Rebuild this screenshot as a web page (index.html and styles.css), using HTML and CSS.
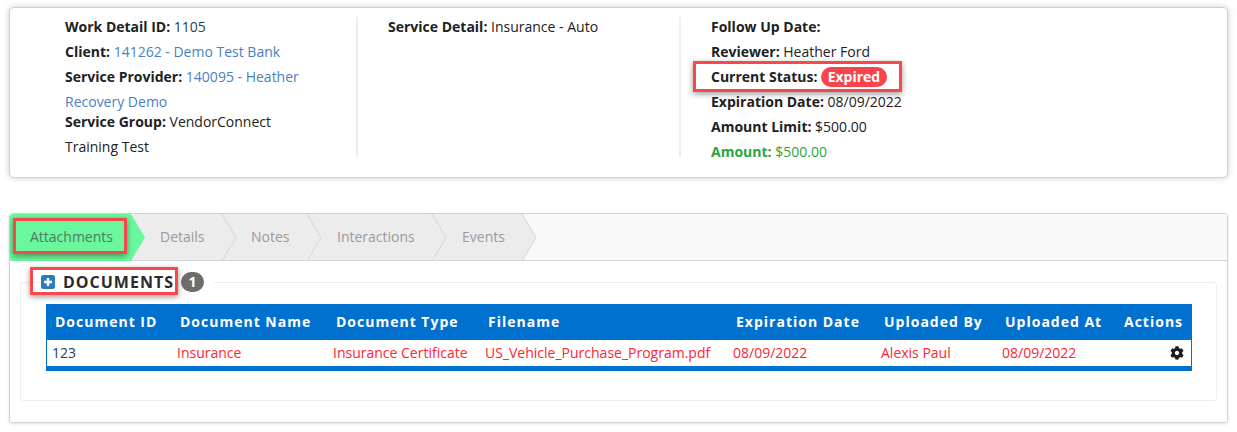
FILE: index.html
```html
<!DOCTYPE html>
<html lang="en">
<head>
<meta charset="utf-8">
<title>Work Detail</title>
<link rel="stylesheet" href="styles.css">
</head>
<body>
<section class="summary">
  <div class="col">
    <div class="row"><b>Work Detail ID:</b> <span class="navy">1105</span></div>
    <div class="row"><b>Client:</b> <a>141262 - Demo Test Bank</a></div>
    <div class="row"><b>Service Provider:</b> <a>140095 - Heather Recovery Demo</a></div>
    <div class="row tight"><b>Service Group:</b> VendorConnect Training Test</div>
  </div>
  <div class="col">
    <div class="row"><b>Service Detail:</b> Insurance - Auto</div>
  </div>
  <div class="col last">
    <div class="row"><b>Follow Up Date:</b></div>
    <div class="row"><b>Reviewer:</b> Heather Ford</div>
    <div class="row marked"><b>Current Status:</b> <span class="pill">Expired</span><i class="mark mark-status"></i></div>
    <div class="row"><b>Expiration Date:</b> 08/09/2022</div>
    <div class="row"><b>Amount Limit:</b> $500.00</div>
    <div class="row green"><b>Amount:</b> $500.00</div>
  </div>
</section>

<section class="panel">
  <nav class="tabs">
    <div class="tab active">Attachments<i class="mark mark-tab"></i><svg class="arrow" viewBox="0 0 14 48" preserveAspectRatio="none"><polygon points="0,0 14,24 0,48" fill="#6bf79e"/></svg></div>
    <div class="tab details">Details<svg class="arrow" viewBox="0 0 14 48" preserveAspectRatio="none"><polygon points="0,0 14,24 0,48" fill="#ececec"/><polyline points="0,0 14,24 0,48" fill="none" stroke="#d6d6d6"/></svg></div>
    <div class="tab notes">Notes<svg class="arrow" viewBox="0 0 14 48" preserveAspectRatio="none"><polygon points="0,0 14,24 0,48" fill="#ececec"/><polyline points="0,0 14,24 0,48" fill="none" stroke="#d6d6d6"/></svg></div>
    <div class="tab interactions">Interactions<svg class="arrow" viewBox="0 0 14 48" preserveAspectRatio="none"><polygon points="0,0 14,24 0,48" fill="#ececec"/><polyline points="0,0 14,24 0,48" fill="none" stroke="#d6d6d6"/></svg></div>
    <div class="tab events">Events<svg class="arrow" viewBox="0 0 14 48" preserveAspectRatio="none"><polygon points="0,0 14,24 0,48" fill="#ececec"/><polyline points="0,0 14,24 0,48" fill="none" stroke="#d6d6d6"/></svg></div>
  </nav>
  <div class="panel-body">
    <fieldset class="docs">
      <legend class="legend">
        <svg class="plus" viewBox="0 0 14 14"><rect width="14" height="14" rx="2.5" fill="#2b7cb9"/><path d="M7 3v8M3 7h8" stroke="#fff" stroke-width="2.4"/></svg>
        <span class="legend-title">DOCUMENTS</span>
        <span class="count">1</span>
        <i class="mark mark-docs"></i>
      </legend>
      <table class="grid">
        <colgroup>
          <col class="c1"><col class="c2"><col class="c3"><col class="c4"><col class="c5"><col class="c6"><col class="c7"><col class="c8">
        </colgroup>
        <thead>
          <tr><th>Document ID</th><th>Document Name</th><th>Document Type</th><th>Filename</th><th>Expiration Date</th><th>Uploaded By</th><th>Uploaded At</th><th>Actions</th></tr>
        </thead>
        <tbody>
          <tr>
            <td class="navy">123</td><td>Insurance</td><td>Insurance Certificate</td><td>US_Vehicle_Purchase_Program.pdf</td><td>08/09/2022</td><td>Alexis Paul</td><td>08/09/2022</td>
            <td class="action"><svg class="gear" viewBox="0 0 512 512"><path fill="#1b1b1b" d="M487.4 315.7l-42.6-24.6c4.3-23.2 4.3-47 0-70.2l42.6-24.6c4.9-2.8 7.1-8.6 5.5-14-11.1-35.6-30-67.8-54.7-94.6-3.8-4.1-10-5.1-14.8-2.3L380.8 110c-17.9-15.4-38.5-27.3-60.8-35.1V25.8c0-5.6-3.9-10.5-9.4-11.7-36.7-8.2-74.3-7.8-109.2 0-5.5 1.2-9.4 6.1-9.4 11.7V75c-22.2 7.9-42.8 19.8-60.8 35.1L88.7 85.5c-4.9-2.8-11-1.9-14.8 2.3-24.7 26.7-43.6 58.9-54.7 94.6-1.7 5.4.6 11.2 5.5 14L67.3 221c-4.3 23.2-4.3 47 0 70.2l-42.6 24.6c-4.9 2.8-7.1 8.6-5.5 14 11.1 35.6 30 67.8 54.7 94.6 3.8 4.1 10 5.1 14.8 2.3l42.6-24.6c17.9 15.4 38.5 27.3 60.8 35.1v49.2c0 5.6 3.9 10.5 9.4 11.7 36.7 8.2 74.3 7.8 109.2 0 5.5-1.2 9.4-6.1 9.4-11.7v-49.2c22.2-7.9 42.8-19.8 60.8-35.1l42.6 24.6c4.9 2.8 11 1.9 14.8-2.3 24.7-26.7 43.6-58.9 54.7-94.6 1.5-5.5-.7-11.3-5.6-14.1zM256 336c-44.1 0-80-35.9-80-80s35.9-80 80-80 80 35.9 80 80-35.9 80-80 80z"/></svg></td>
          </tr>
        </tbody>
      </table>
    </fieldset>
  </div>
</section>
</body>
</html>
```
FILE: styles.css
```css
* { box-sizing: border-box; }
html, body { margin: 0; }
body {
  width: 1237px;
  height: 432px;
  overflow: hidden;
  padding: 7px 9px 0 9px;
  background: #fff;
  font-family: "Open Sans", "Liberation Sans", sans-serif;
  font-size: 14px;
  color: #212121;
}
b { font-weight: 700; }
.summary {
  display: flex;
  height: 171px;
  padding: 9px 25px 0;
  background: #fff;
  border: 1px solid #cfcfcf;
  border-radius: 5px;
  box-shadow: 0 0 6px rgba(0, 0, 0, .2);
}
.col {
  width: 323px;
  height: 140px;
  padding: 0 30px;
  border-right: 2px solid #eee;
}
.col.last { border-right: 0; height: auto; }
.row { line-height: 25px; position: relative; }
.row:first-child { margin-top: -3px; }
.row.tight { margin-top: -5px; }
.navy { color: #25405f; }
a { color: #4a7fc0; }
.green { color: #2aa53c; }
.pill {
  display: inline-block;
  padding: 0 6.5px;
  line-height: 20px;
  border-radius: 10px;
  background: #f8454d;
  color: #fff;
  font-weight: 700;
}
.mark {
  position: absolute;
  border: 3px solid #f9474e;
  box-shadow: 0 2px 6px rgba(0, 0, 0, .4);
}
.mark-status { left: -18px; top: -3px; width: 209px; height: 31px; }
.panel {
  height: 210px;
  margin-top: 35px;
  border: 1px solid #d2d2d2;
  border-radius: 3px;
  box-shadow: 0 1px 3px rgba(0, 0, 0, .12);
}
.tabs {
  display: flex;
  height: 47px;
  background: #f9f9f9;
  border-bottom: 1px solid #d6d6d6;
}
.tab {
  position: relative;
  display: flex;
  align-items: center;
  height: 47px;
  padding-bottom: 2px;
  background: #ececec;
  border-bottom: 1px solid #d6d6d6;
  color: #9a9a9a;
}
.tab.active {
  width: 121px;
  padding-left: 20px;
  background: #6bf79e;
  color: #4f7a62;
  border-radius: 3px 0 0 3px;
  border-bottom: 0;
}
.details { width: 91px; padding-left: 29px; }
.notes { width: 85px; padding-left: 29px; }
.interactions { width: 125px; padding-left: 30px; }
.events { width: 90px; padding-left: 30px; }
.arrow {
  position: absolute;
  top: 0;
  left: 100%;
  width: 14px;
  height: 47px;
  z-index: 1;
  overflow: visible;
}
.mark-tab { left: 3px; top: 4px; width: 114px; height: 36px; z-index: 2; }
.panel-body { padding: 11px 10px 0; }
.docs {
  height: 129px;
  margin: 0;
  padding: 10px 25px 0;
  min-width: 0;
  border: 1px solid #eee;
  border-radius: 3px;
}
.legend {
  position: relative;
  display: flex;
  align-items: center;
  height: 20px;
  margin-left: -5px;
  padding: 0 10px 0 0;
  line-height: 20px;
}
.plus { width: 14px; height: 14px; margin-right: 8px; }
.legend-title {
  font-size: 16px;
  font-weight: 700;
  letter-spacing: 1px;
  color: #2b2b2b;
  margin-right: 7px;
}
.count {
  width: 23px;
  height: 20px;
  border-radius: 10px;
  background: #6d6d6d;
  color: #fff;
  font-weight: 700;
  text-align: center;
}
.mark-docs { left: -11px; top: -5px; width: 148px; height: 28px; }
.grid {
  width: 1146px;
  margin-top: 2px;
  table-layout: fixed;
  border-collapse: separate;
  border-spacing: 0;
  border: 1px solid #0071ce;
  border-bottom-width: 5px;
}
.c1 { width: 124px; }
.c2 { width: 156px; }
.c3 { width: 152px; }
.c4 { width: 248px; }
.c5 { width: 148px; }
.c6 { width: 121px; }
.c7 { width: 120px; }
.c8 { width: 75px; }
th {
  height: 35px;
  padding: 0 0 2px 9px;
  background: #0071ce;
  color: #fff;
  font-size: 14px;
  font-weight: 700;
  letter-spacing: 1px;
  text-align: left;
  white-space: nowrap;
}
th:first-child, th:last-child { padding-left: 8px; }
td {
  height: 26px;
  padding: 0 0 1px 6px;
  color: #ff2335;
  white-space: nowrap;
}
td.navy { color: #25405f; padding-left: 5px; }
td.action { text-align: right; padding: 0 7px 0 0; }
.gear { display: block; width: 14px; height: 14px; margin-left: auto; }
```
